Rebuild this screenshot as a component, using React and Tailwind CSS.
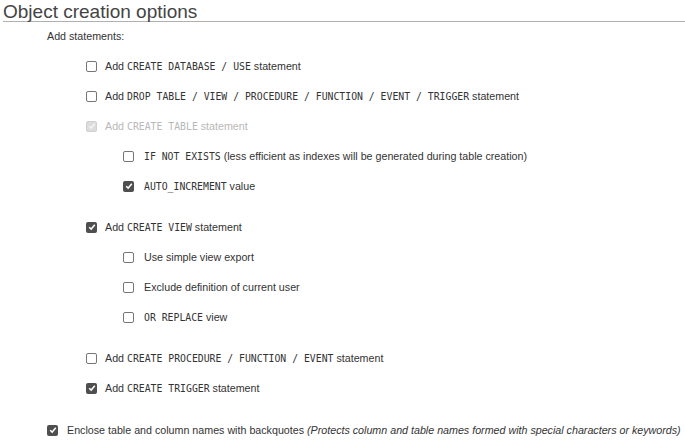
const Box = ({ checked, disabled }) => {
  if (disabled) {
    return (
      <span className="w-[11px] h-[11px] rounded-[2px] bg-[#dcdcdc] border border-[#d0d0d0] flex items-center justify-center shrink-0">
        <svg width="8" height="8" viewBox="0 0 8 8">
          <path d="M1.2 4.2 L3.2 6.1 L6.8 1.8" fill="none" stroke="#f4f4f4" strokeWidth="1.5" />
        </svg>
      </span>
    );
  }
  if (checked) {
    return (
      <span className="w-[11px] h-[11px] rounded-[2px] bg-[#4f4f4f] flex items-center justify-center shrink-0">
        <svg width="8" height="8" viewBox="0 0 8 8">
          <path d="M1.2 4.2 L3.2 6.1 L6.8 1.8" fill="none" stroke="#ffffff" strokeWidth="1.5" />
        </svg>
      </span>
    );
  }
  return <span className="w-[11px] h-[11px] rounded-[2px] border border-[#767676] bg-white shrink-0" />;
};

const C = ({ children }) => (
  <code className="font-['DejaVu_Sans_Mono',monospace] text-[9.8px]">{children}</code>
);

const Row = ({ level = 1, checked, disabled, children, className = '' }) => {
  const pad = level === 2 ? 'pl-[123px] gap-[10px]' : level === 0 ? 'pl-[47px] gap-[9px]' : 'pl-[86px] gap-[8px]';
  return (
    <div className={`h-[30px] flex items-center whitespace-nowrap ${pad} ${className}`}>
      <Box checked={checked} disabled={disabled} />
      <span className={disabled ? 'text-[#b8b8b8]' : 'text-[#333]'}>{children}</span>
    </div>
  );
};

const App = () => {
  return (
    <div className="w-[685px] h-[445px] bg-white overflow-hidden font-['Liberation_Sans',Arial,sans-serif] text-[10.7px] text-[#333]">
      <div className="ml-[3px] h-[22px] border-b border-[#b0b0b0] text-[19px] leading-[23px] text-[#444]">
        <div>Object creation options</div>
      </div>
      <div className="h-[29px] flex items-center pl-[47px]">Add statements:</div>

      <Row>
        Add <C>CREATE DATABASE / USE</C> statement
      </Row>
      <Row>
        Add <C>DROP TABLE / VIEW / PROCEDURE / FUNCTION / EVENT / TRIGGER</C> statement
      </Row>
      <Row checked disabled>
        Add <C>CREATE TABLE</C> statement
      </Row>
      <Row level={2}>
        <C>IF NOT EXISTS</C> (less efficient as indexes will be generated during table creation)
      </Row>
      <Row level={2} checked>
        <C>AUTO_INCREMENT</C> value
      </Row>

      <Row checked className="mt-[11px]">
        Add <C>CREATE VIEW</C> statement
      </Row>
      <Row level={2}>Use simple view export</Row>
      <Row level={2}>Exclude definition of current user</Row>
      <Row level={2}>
        <C>OR REPLACE</C> view
      </Row>

      <Row className="mt-[11px]">
        Add <C>CREATE PROCEDURE / FUNCTION / EVENT</C> statement
      </Row>
      <Row checked>
        Add <C>CREATE TRIGGER</C> statement
      </Row>

      <Row level={0} checked className="mt-[12px]">
        Enclose table and column names with backquotes{' '}
        <i>(Protects column and table names formed with special characters or keywords)</i>
      </Row>
    </div>
  );
};

export default App;
